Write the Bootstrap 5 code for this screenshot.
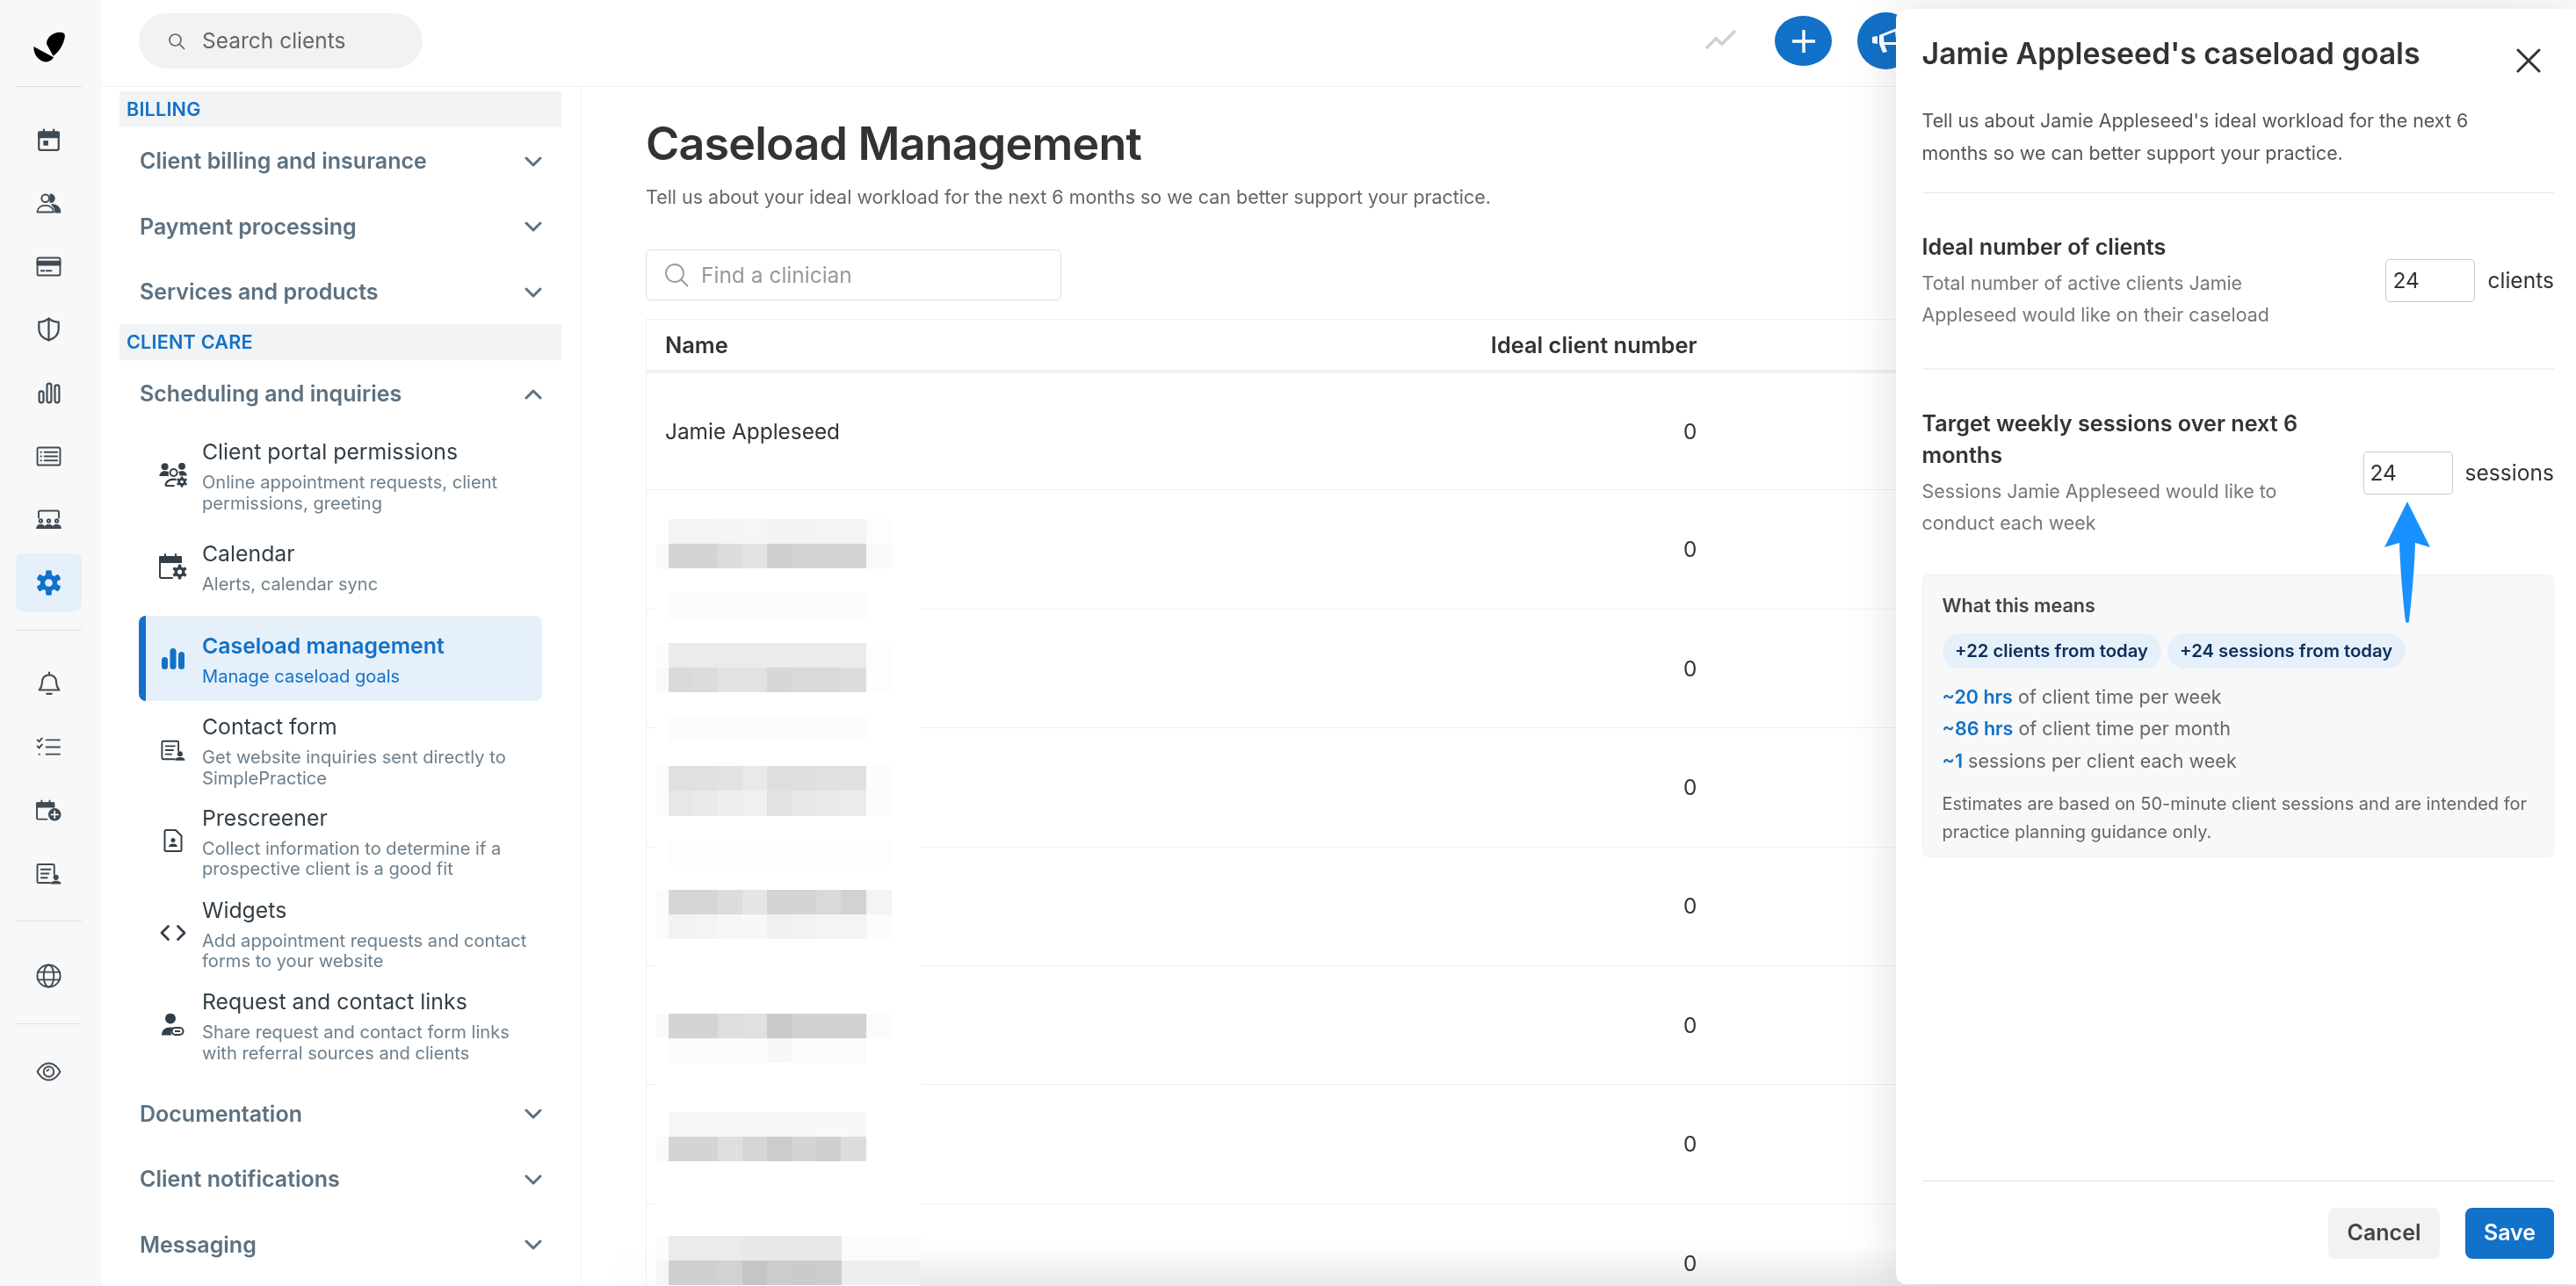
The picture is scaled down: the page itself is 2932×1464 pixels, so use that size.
<!DOCTYPE html>
<html lang="en">
<head>
<meta charset="utf-8">
<title>Caseload Management</title>
<link href="https://cdn.jsdelivr.net/npm/bootstrap@5.3.0/dist/css/bootstrap.min.css" rel="stylesheet">
<style>
html,body{margin:0;width:2932px;height:1464px;overflow:hidden;background:#fff}
body{font-family:Inter,"Liberation Sans",sans-serif;color:#333;position:relative}
svg{display:block;flex:none}
.stroke-ico{fill:none;stroke:currentColor;stroke-width:2;stroke-linecap:round;stroke-linejoin:round}
.shell{width:2932px;height:1464px}
/* icon rail */
.rail{width:115px;height:1464px;background:#f8f8f9;color:#3f4b55;flex:none}
.rail-logo{height:99px;margin:0 22px 0 18px;padding-top:9px;border-bottom:1px solid #dfdfdf;color:#000}
.rail-group{margin:0 22px 0 18px;padding:24px 0 18px;border-bottom:1px solid #dfdfdf}
.rail-group:last-child{border-bottom:0}
.rg-c{padding-top:26px}
.rg-d{padding-top:18px}
.rail-item{height:72px}
.rail-active{height:66px;margin:3px 0;border-radius:8px;background:#e5f0fa;color:#1271c8}
/* top */
.workspace{width:2817px;height:1464px}
.topbar{height:99px;border-bottom:1px solid #efefef;flex:none}
.search-pill{width:323px;height:63px;margin:15px 0 0 43px;border-radius:32px;background:#f2f2f2;color:#666;font-size:24.500px;padding-left:33px;gap:19px}
.chart-mark{position:absolute;left:1941px;top:33px;color:#cfcfcf}
.round-btn{position:absolute;background:#1271c8;color:#fff;border-radius:50%}
.rb-plus{left:2020px;top:18px;width:65px;height:57px}
.rb-horn{left:2114px;top:14px;width:65px;height:65px}
/* settings nav */
.setnav{width:547px;flex:none;padding:5px 22px 0 21px;border-right:1px solid #f6f6f6}
.band{height:41px;background:#f1f3f5;color:#1271c8;font-weight:600;font-size:21.600px;padding-left:8px;line-height:41px;letter-spacing:.2px;margin-bottom:1.500px}
.band-b{margin-top:-1px;margin-bottom:1.500px}
.acc-row{height:74.500px;padding:0 22px 0 23px;color:#5c7181;font-size:25px;font-weight:600}
.sub-list{color:#333f48}
.sub-item{margin-left:22px;margin-right:22px;padding-left:72px;position:relative;display:flex;flex-direction:column;justify-content:flex-start}
.sub-ttl{font-size:24.800px;line-height:36px;white-space:nowrap}
.sub-txt{font-size:20.100px;line-height:23.600px;color:#6c7f8c;margin-top:6px}
.sub-ico{position:absolute;left:23px;top:50%;transform:translateY(-50%);width:32px;display:flex;justify-content:center}
.si-active{background:#e5f0fa;color:#1271c8;border-left:8px solid #1271c8;border-radius:8px;padding:16px 0 16px 64px;margin-top:23px}
.si-active .sub-ttl{font-weight:600}
.si-active .sub-txt{color:#1271c8}
.si-active .sub-ico{left:15px}
.mt-a{margin-top:10px}.mt-b{margin-top:27px}.mt-c{margin-top:11px}.mt-d{margin-top:14px}.mt-e{margin-top:16px}.mt-f{margin-top:15px}.mt-g{margin-top:20px}
/* main */
.content{padding:35px 0 0 73px;flex:1;position:relative;overflow:hidden}
.content::after{content:"";position:absolute;left:30px;right:0;bottom:0;height:46px;z-index:1;mix-blend-mode:multiply;background:linear-gradient(rgba(232,232,232,0),#e8e8e8);-webkit-mask-image:linear-gradient(90deg,transparent,#000 360px);mask-image:linear-gradient(90deg,transparent,#000 360px)}
.page-ttl{font-size:52px;line-height:60px;font-weight:600;margin:0;color:#333;letter-spacing:-.8px}
.page-sub{font-size:21.450px;line-height:30px;color:#666;margin:15px 0 45px}
.finder{width:473px;height:58px;border:1px solid #ddd;border-radius:6px;padding-left:20px;gap:14px;color:#999;font-size:24.500px;margin-bottom:21px}
.grid-table{width:2140px;table-layout:fixed;border-collapse:collapse;border-left:1px solid #f0f0f0;font-size:24.400px;margin:0}
.grid-table th{height:59px;font-weight:600;font-size:25.400px;border-top:1px solid #f0f0f0;border-bottom:4px solid #f2f2f2;color:#333;padding:2px 0 0}
.grid-table td{height:135.400px;border-bottom:1px solid #f0f0f0;padding:0;color:#333}
.cell-name{padding-left:21px!important}
.redact{position:absolute;left:85px;top:492px;width:301px;height:873px;background:#fff;z-index:2}
.pl{height:28.130px;width:301px}
.g0{background:linear-gradient(90deg,#fff 14px,#f4f4f4 14px 70px,#f5f5f5 70px 98px,#f6f6f6 98px 126px,#f3f3f3 126px 182px,#f4f4f4 182px 239px,#fdfdfd 239px 268px,#fff 268px)}
.g1{background:linear-gradient(90deg,#fafafa 14px,#d4d4d4 14px 70px,#ddd 70px 98px,#e3e3e3 98px 126px,#cfcfcf 126px 154px,#d3d3d3 154px 239px,#fafafa 239px 268px,#fff 268px)}
.g3{background:linear-gradient(90deg,#fff 14px,#fcfcfc 14px 239px,#fff 239px)}
.g5{background:linear-gradient(90deg,#fcfcfc 14px,#ebebeb 14px 239px,#fdfdfd 239px 268px,#fff 268px)}
.g6{background:linear-gradient(90deg,#fafafa 14px,#dadada 14px 42px,#dcdcdc 42px 70px,#e2e2e2 70px 126px,#d6d6d6 126px 154px,#d9d9d9 154px 210px,#ddd 210px 239px,#fdfdfd 239px 268px,#fff 268px)}
.g10{background:linear-gradient(90deg,#fcfcfc 14px,#e0e0e0 14px 70px,#e2e2e2 70px 98px,#e9e9e9 98px 126px,#dedede 126px 154px,#dfdfdf 154px 182px,#e0e0e0 182px 239px,#fcfcfc 239px 268px,#fff 268px)}
.g11{background:linear-gradient(90deg,#fcfcfc 14px,#e7e7e7 14px 42px,#eaeaea 42px 70px,#eee 70px 98px,#f0f0f0 98px 126px,#e2e2e2 126px 154px,#e8e8e8 154px 182px,#e9e9e9 182px 210px,#ebebeb 210px 239px,#fcfcfc 239px 268px,#fff 268px)}
.g13{background:linear-gradient(90deg,#fff 14px,#fdfdfd 14px 268px,#fff 268px)}
.g15{background:linear-gradient(90deg,#fbfbfb 14px,#d6d6d6 14px 70px,#ddd 70px 98px,#e6e6e6 98px 126px,#d4d4d4 126px 182px,#d9d9d9 182px 210px,#d2d2d2 210px 239px,#f4f4f4 239px 268px,#fff 268px)}
.g16{background:linear-gradient(90deg,#fcfcfc 14px,#f3f3f3 14px 42px,#f4f4f4 42px 70px,#f7f7f7 70px 98px,#f8f8f8 98px 126px,#f1f1f1 126px 154px,#f2f2f2 154px 182px,#f4f4f4 182px 239px,#fcfcfc 239px 268px,#fff 268px)}
.g20{background:linear-gradient(90deg,#fafafa 14px,#d3d3d3 14px 70px,#dedede 70px 98px,#e0e0e0 98px 126px,#cacaca 126px 154px,#d1d1d1 154px 239px,#fbfbfb 239px 268px,#fff 268px)}
.g21{background:linear-gradient(90deg,#fff 14px,#fbfbfb 14px 126px,#f8f8f8 126px 154px,#fbfbfb 154px 239px,#fff 239px)}
.g24{background:linear-gradient(90deg,#fff 14px,#f6f6f6 14px 70px,#f7f7f7 70px 98px,#f6f6f6 98px 154px,#f8f8f8 154px 239px,#fff 239px)}
.g25{background:linear-gradient(90deg,#fafafa 14px,#d4d4d4 14px 70px,#dfdfdf 70px 98px,#d6d6d6 98px 126px,#ccc 126px 154px,#d4d4d4 154px 182px,#cfcfcf 182px 210px,#ddd 210px 239px,#fff 239px)}
.g29{background:linear-gradient(90deg,#fcfcfc 14px,#ebebeb 14px 98px,#e8e8e8 98px 211px,#fbfbfb 211px)}
.g30{background:linear-gradient(90deg,#f6f6f6 14px,#cfcfcf 14px 70px,#d2d2d2 70px 98px,#c5c5c5 98px 126px,#ccc 126px 154px,#cbcbcb 154px 182px,#ccc 182px 211px,#eee 211px)}
/* panel */
.goal-panel{position:absolute;left:2158px;top:10px;right:0;bottom:2px;background:#fff;border-radius:12px 0 0 12px;box-shadow:0 0 60px rgba(0,0,0,.13);padding:27px 25px 29px 29.500px;z-index:5}
.goal-ttl{font-size:33.900px;line-height:48px;font-weight:600;color:#333;margin:0}
.closer{position:absolute;left:706px;top:45px}
.goal-intro{font-size:21.400px;line-height:36.500px;color:#555;margin:34px 0 27px}
.goal-sec{padding:43px 0 42px;border-top:1px solid #e6e6e6}
.goal-sec-b{border-top:2px solid #f2f2f2;padding-bottom:40px}
.goal-q{max-width:460px}
.goal-h{font-size:25.200px;line-height:36.500px;font-weight:600;color:#333}
.goal-d{font-size:21.400px;line-height:36.500px;color:#777;margin-top:4px}
.goal-input{width:102px;height:49px;border:1px solid #c9c9c9;border-radius:5px;padding-left:7px;font-size:24.500px;line-height:47px;color:#333}
.goal-unit{font-size:24.600px;color:#333;margin-left:14px;line-height:47px}
.means{height:322px;background:#f8f8f8;border:1px solid #f0f0f0;border-radius:7px;padding:19px 20px 0 22px;font-size:21.500px;color:#666}
.means-h{font-weight:600;font-size:21.600px;line-height:30px;color:#444}
.pill-tag{height:40px;border-radius:20px;background:#e5f0fa;color:#0c2f5c;font-size:20.300px;font-weight:600;line-height:40px;padding:0 14.500px}
.pill-row{gap:7px;margin:17px 0 14px}
.means-l{line-height:36.500px}
.means-l b{color:#1271c8;font-weight:600}
.means-n{font-size:20px;line-height:32px;margin-top:15px}
.goal-foot{border-top:1px solid #e3e3e3;padding-top:30px;margin-top:auto;gap:29px}
.act-btn{height:58px;border:0;border-radius:8px;font-size:25px;font-weight:600;padding:0}
.act-c{width:127px;background:#f2f2f2;color:#444}
.act-s{width:101px;background:#1271c8;color:#fff}
.blue-arrow{position:absolute;left:556px;top:561px;z-index:6}
</style>
</head>
<body>
<div class="shell d-flex">
  <nav class="rail d-flex flex-column">
    <div class="rail-logo d-flex align-items-center justify-content-center">
      <svg width="38" height="36" viewBox="36 36 38 36" fill="currentColor"><path d="M72.800 40C72.500 36.500 66 36 61 38C55 40.500 52 45 52 50L59.500 63.800C64 61 67.500 56 70 51C71.800 47 73 43 72.800 40Z"/><path d="M37.300 53L60 65.300C58 68.500 55 70.500 52 70.500C44 70.500 37 63 37.300 53Z"/></svg>
    </div>
    <div class="rail-group">
      <div class="rail-item d-flex align-items-center justify-content-center">
        <svg width="27" height="27" viewBox="0 0 24 24" class="stroke-ico"><rect x="2" y="4" width="20" height="18" rx="1.500"/><path d="M2 4h20v5H2z" fill="currentColor"/><path d="M7 1.500v3M17 1.500v3"/><rect x="6.500" y="12.500" width="5" height="5" fill="currentColor" stroke="none"/></svg>
      </div>
      <div class="rail-item d-flex align-items-center justify-content-center">
        <svg width="29" height="23" viewBox="0 0 30 24" class="stroke-ico"><circle cx="11" cy="6" r="4.500"/><path d="M17 1.500a4.500 4.500 0 0 1 0 9z" fill="currentColor"/><path d="M1.500 22.500c0-5 4-8 9.500-8s9.500 3 9.500 8z"/><path d="M19 13.500c5 .5 9 3.500 9.500 9H23c0-3.500-1.500-6.500-4-9z" fill="currentColor"/></svg>
      </div>
      <div class="rail-item d-flex align-items-center justify-content-center">
        <svg width="29" height="23" viewBox="0 0 30 24" class="stroke-ico"><rect x="1.500" y="1.500" width="27" height="21" rx="2"/><path d="M1.500 6h27v4h-27z" fill="currentColor"/><path d="M6 17h3.500M12 17h6"/></svg>
      </div>
      <div class="rail-item d-flex align-items-center justify-content-center">
        <svg width="27" height="28" viewBox="0 0 24 25" class="stroke-ico"><path d="M12 1.500c3 2.500 6 3.500 10 3.500v7c0 5.500-4 9.500-10 11.500C6 21.500 2 17.500 2 12V5c4 0 7-1 10-3.500z"/><path d="M12 1.500v22"/></svg>
      </div>
      <div class="rail-item d-flex align-items-center justify-content-center">
        <svg width="26" height="25" viewBox="0 0 24 22" class="stroke-ico"><rect x="1.500" y="9" width="4.500" height="12" rx="2.200"/><rect x="9.700" y="1" width="4.500" height="20" rx="2.200"/><rect x="18" y="2.500" width="4.500" height="18.500" rx="2.200"/></svg>
      </div>
      <div class="rail-item d-flex align-items-center justify-content-center">
        <svg width="29" height="23" viewBox="0 0 30 24" class="stroke-ico"><rect x="1.500" y="1.500" width="27" height="21" rx="2"/><path d="M10 7h15M10 12h15M10 17h15"/><path d="M5.500 7h.5M5.500 12h.5M5.500 17h.5"/></svg>
      </div>
      <div class="rail-item d-flex align-items-center justify-content-center">
        <svg width="29" height="23" viewBox="0 0 30 24" class="stroke-ico"><path d="M3 10V3a1.500 1.500 0 0 1 1.500-1.500h21A1.500 1.500 0 0 1 27 3v7"/><circle cx="5.500" cy="13.500" r="1.800"/><circle cx="15" cy="13.500" r="1.800"/><circle cx="24.500" cy="13.500" r="1.800"/><g fill="currentColor" stroke="none"><path d="M0 23c.2-4 2.500-5.500 5.500-5.500s5.300 1.500 5.500 5.500z"/><path d="M9.500 23c.2-4 2.500-5.500 5.500-5.500s5.300 1.500 5.500 5.500z"/><path d="M19 23c.2-4 2.500-5.500 5.500-5.500s5.300 1.500 5.500 5.500z"/></g></svg>
      </div>
      <div class="rail-active d-flex align-items-center justify-content-center">
        <svg width="29" height="29" viewBox="-12 -12 24 24" fill="currentColor"><circle r="8"/><g><rect x="-2.800" y="-11.800" width="5.600" height="6" rx="1.500"/><rect x="-2.800" y="-11.800" width="5.600" height="6" rx="1.500" transform="rotate(60)"/><rect x="-2.800" y="-11.800" width="5.600" height="6" rx="1.500" transform="rotate(120)"/><rect x="-2.800" y="-11.800" width="5.600" height="6" rx="1.500" transform="rotate(180)"/><rect x="-2.800" y="-11.800" width="5.600" height="6" rx="1.500" transform="rotate(240)"/><rect x="-2.800" y="-11.800" width="5.600" height="6" rx="1.500" transform="rotate(300)"/></g><circle r="3.600" fill="#e5f0fa"/></svg>
      </div>
    </div>
    <div class="rail-group">
      <div class="rail-item d-flex align-items-center justify-content-center">
        <svg width="26" height="28" viewBox="0 0 24 26" class="stroke-ico"><path d="M12 1.500v2.500M4.500 12c0-5 3-8 7.500-8s7.500 3 7.500 8c0 4 1.500 6 3 8h-21c1.500-2 3-4 3-8z"/><path d="M9.500 24h5"/></svg>
      </div>
      <div class="rail-item d-flex align-items-center justify-content-center">
        <svg width="29" height="23" viewBox="0 0 30 24" class="stroke-ico"><path d="M12 3.500h16M12 12h16M12 20.500h16"/><path d="M1.500 3.500l2 2 3.500-4M1.500 11l2 2 3.500-4M3.500 20.500h.5"/></svg>
      </div>
      <div class="rail-item d-flex align-items-center justify-content-center">
        <svg width="29" height="25" viewBox="0 0 30 26" class="stroke-ico"><path d="M21 9V6a1.500 1.500 0 0 0-1.500-1.500h-17A1.500 1.500 0 0 0 1 6v16a1.500 1.500 0 0 0 1.500 1.500H13"/><path d="M1 4.500h20V9H1z" fill="currentColor"/><path d="M6.500 1.500v3M16 1.500v3"/><circle cx="22" cy="18" r="7.500" fill="currentColor" stroke="none"/><path d="M22 14v8M18 18h8" stroke="#f8f8f9" stroke-width="1.800"/></svg>
      </div>
      <div class="rail-item d-flex align-items-center justify-content-center">
        <svg width="29" height="25" viewBox="0 0 30 26" class="stroke-ico"><path d="M17 24H3a1.500 1.500 0 0 1-1.500-1.500v-19A1.500 1.500 0 0 1 3 2h17a1.500 1.500 0 0 1 1.500 1.500V14"/><path d="M6 8h11M6 13h9M6 18h7"/><circle cx="23.500" cy="17.500" r="3.200" fill="currentColor" stroke="none"/><path d="M17.500 25.500c.2-3 2.500-4 6-4s5.800 1 6 4z" fill="currentColor" stroke="none"/></svg>
      </div>
    </div>
    <div class="rail-group rg-c">
      <div class="rail-item d-flex align-items-center justify-content-center">
        <svg width="29" height="28" viewBox="0 0 30 29" class="stroke-ico"><ellipse cx="15" cy="14.500" rx="13.500" ry="13"/><ellipse cx="15" cy="14.500" rx="6" ry="13"/><path d="M2 10h26M2 19h26"/></svg>
      </div>
    </div>
    <div class="rail-group rg-d">
      <div class="rail-item d-flex align-items-center justify-content-center">
        <svg width="29" height="22" viewBox="0 0 30 23" class="stroke-ico"><path d="M1.500 11.500S6.500 1.500 15 1.500s13.500 10 13.500 10-5 10-13.500 10S1.500 11.500 1.500 11.500z"/><circle cx="15" cy="11.500" r="6"/><path d="M13 10.500a3 3 0 0 1 2-1.500"/></svg>
      </div>
    </div>
  </nav>
  <div class="workspace d-flex flex-column">
    <header class="topbar">
      <div class="search-pill d-flex align-items-center">
        <svg width="20" height="20" viewBox="0 0 20 20" fill="none" stroke="#666" stroke-width="1.700" stroke-linecap="round"><circle cx="8.500" cy="8.500" r="6.500"/><path d="M13.500 13.500l5 5"/></svg>
        <span>Search clients</span>
      </div>
    </header>
    <div class="d-flex flex-grow-1" style="min-height:0">
      <aside class="setnav">
        <div class="band">BILLING</div>
        <div class="acc-row d-flex align-items-center justify-content-between"><span>Client billing and insurance</span><svg width="20" height="14" viewBox="0 0 20 14" fill="none" stroke="currentColor" stroke-width="3" stroke-linecap="round" stroke-linejoin="round"><path d="M2 3l8 8 8-8"/></svg></div>
        <div class="acc-row d-flex align-items-center justify-content-between"><span>Payment processing</span><svg width="20" height="14" viewBox="0 0 20 14" fill="none" stroke="currentColor" stroke-width="3" stroke-linecap="round" stroke-linejoin="round"><path d="M2 3l8 8 8-8"/></svg></div>
        <div class="acc-row d-flex align-items-center justify-content-between"><span>Services and products</span><svg width="20" height="14" viewBox="0 0 20 14" fill="none" stroke="currentColor" stroke-width="3" stroke-linecap="round" stroke-linejoin="round"><path d="M2 3l8 8 8-8"/></svg></div>
        <div class="band band-b">CLIENT CARE</div>
        <div class="acc-row d-flex align-items-center justify-content-between"><span>Scheduling and inquiries</span><svg width="20" height="14" viewBox="0 0 20 14" fill="none" stroke="currentColor" stroke-width="3" stroke-linecap="round" stroke-linejoin="round"><path d="M2 11l8-8 8 8"/></svg></div>
        <div class="sub-list">
          <div class="sub-item mt-a">
            <span class="sub-ico"><svg width="32" height="28" viewBox="0 0 32 28" fill="currentColor"><circle cx="6.600" cy="4.300" r="4"/><path d="M.3 15C1 11 3.500 9.300 6.600 9.300c1.800 0 3.300.4 4.500 1.200-.6 1.300-.6 3 .1 4.500z"/><circle cx="26" cy="3.800" r="4"/><path d="M22 10.500c.8-.8 2.500-1.300 4-1.300 3 0 5.500 2 6 5.300h-8.500c0-1.500-.6-3-1.500-4z"/><circle cx="16.600" cy="11" r="4" fill="none" stroke="currentColor" stroke-width="2"/><path d="M7.500 26c0-4.500 4-7.300 9-7.300 1 0 2 .1 3 .4M7.500 26h10" fill="none" stroke="currentColor" stroke-width="2.200"/><g transform="translate(26 21.500)"><circle r="4.500"/><rect x="-1.300" y="-6.300" width="2.600" height="12.600" rx="1"/><rect x="-1.300" y="-6.300" width="2.600" height="12.600" rx="1" transform="rotate(60)"/><rect x="-1.300" y="-6.300" width="2.600" height="12.600" rx="1" transform="rotate(120)"/><circle r="1.800" fill="#fff"/></g></svg></span>
            <div class="sub-ttl">Client portal permissions</div>
            <div class="sub-txt">Online appointment requests, client<br>permissions, greeting</div>
          </div>
          <div class="sub-item mt-b">
            <span class="sub-ico"><svg width="32" height="30" viewBox="0 0 32 30" class="stroke-ico"><path d="M25 10V5.500A1.500 1.500 0 0 0 23.500 4h-21A1.500 1.500 0 0 0 1 5.500v21A1.500 1.500 0 0 0 2.500 28H15"/><path d="M1 4h24v6H1z" fill="currentColor"/><path d="M7 1v3M19 1v3"/><g transform="translate(23.500 21)" fill="currentColor" stroke="none"><circle r="6"/><rect x="-1.800" y="-8.400" width="3.600" height="16.800" rx="1"/><rect x="-1.800" y="-8.400" width="3.600" height="16.800" rx="1" transform="rotate(60)"/><rect x="-1.800" y="-8.400" width="3.600" height="16.800" rx="1" transform="rotate(120)"/><circle r="2.600" fill="#fff"/></g></svg></span>
            <div class="sub-ttl">Calendar</div>
            <div class="sub-txt">Alerts, calendar sync</div>
          </div>
          <div class="sub-item si-active">
            <span class="sub-ico"><svg width="26" height="24" viewBox="0 0 26 24" fill="currentColor"><rect x="0" y="10" width="7" height="14" rx="3.500"/><rect x="9.500" y="0" width="7" height="24" rx="3.500"/><rect x="19" y="4" width="7" height="20" rx="3.500"/></svg></span>
            <div class="sub-ttl">Caseload management</div>
            <div class="sub-txt">Manage caseload goals</div>
          </div>
          <div class="sub-item mt-c">
            <span class="sub-ico"><svg width="28" height="26" viewBox="0 0 30 26" class="stroke-ico"><path d="M17 24H3a1.500 1.500 0 0 1-1.500-1.500v-19A1.500 1.500 0 0 1 3 2h17a1.500 1.500 0 0 1 1.500 1.500V14"/><path d="M6 8h11M6 13h9M6 18h7"/><circle cx="23.500" cy="17.500" r="3.200" fill="currentColor" stroke="none"/><path d="M17.500 25.500c.2-3 2.500-4 6-4s5.800 1 6 4z" fill="currentColor" stroke="none"/></svg></span>
            <div class="sub-ttl">Contact form</div>
            <div class="sub-txt">Get website inquiries sent directly to<br>SimplePractice</div>
          </div>
          <div class="sub-item mt-d">
            <span class="sub-ico"><svg width="22" height="27" viewBox="0 0 22 27" class="stroke-ico"><path d="M14 1.500H3A1.500 1.500 0 0 0 1.500 3v21A1.500 1.500 0 0 0 3 25.500h16a1.500 1.500 0 0 0 1.500-1.500V8z"/><circle cx="11" cy="13" r="2.500" fill="currentColor" stroke="none"/><path d="M6 20.500c.3-2.500 2-3.500 5-3.500s4.700 1 5 3.500z" fill="currentColor" stroke="none"/></svg></span>
            <div class="sub-ttl">Prescreener</div>
            <div class="sub-txt">Collect information to determine if a<br>prospective client is a good fit</div>
          </div>
          <div class="sub-item mt-e">
            <span class="sub-ico"><svg width="30" height="19" viewBox="0 0 30 19" fill="none" stroke="currentColor" stroke-width="2.800" stroke-linecap="round" stroke-linejoin="round"><path d="M9.500 2L2 9.500 9.500 17M20.500 2L28 9.500 20.500 17"/></svg></span>
            <div class="sub-ttl">Widgets</div>
            <div class="sub-txt">Add appointment requests and contact<br>forms to your website</div>
          </div>
          <div class="sub-item mt-f">
            <span class="sub-ico"><svg width="26" height="27" viewBox="0 0 26 27" fill="currentColor"><circle cx="10" cy="6" r="6"/><path d="M0 25c0-6 4-9 10-9 1 0 2 .1 3 .3-2 1.500-3 5-2 8.700z"/><rect x="11.500" y="16.500" width="13" height="8" rx="4" fill="none" stroke="currentColor" stroke-width="2"/><path d="M15 20.500h6" stroke="currentColor" stroke-width="2"/></svg></span>
            <div class="sub-ttl">Request and contact links</div>
            <div class="sub-txt">Share request and contact form links<br>with referral sources and clients</div>
          </div>
        </div>
        <div class="acc-row mt-g d-flex align-items-center justify-content-between"><span>Documentation</span><svg width="20" height="14" viewBox="0 0 20 14" fill="none" stroke="currentColor" stroke-width="3" stroke-linecap="round" stroke-linejoin="round"><path d="M2 3l8 8 8-8"/></svg></div>
        <div class="acc-row d-flex align-items-center justify-content-between"><span>Client notifications</span><svg width="20" height="14" viewBox="0 0 20 14" fill="none" stroke="currentColor" stroke-width="3" stroke-linecap="round" stroke-linejoin="round"><path d="M2 3l8 8 8-8"/></svg></div>
        <div class="acc-row d-flex align-items-center justify-content-between"><span>Messaging</span><svg width="20" height="14" viewBox="0 0 20 14" fill="none" stroke="currentColor" stroke-width="3" stroke-linecap="round" stroke-linejoin="round"><path d="M2 3l8 8 8-8"/></svg></div>
      </aside>
      <main class="content">
        <h1 class="page-ttl">Caseload Management</h1>
        <p class="page-sub">Tell us about your ideal workload for the next 6 months so we can better support your practice.</p>
        <div class="finder d-flex align-items-center">
          <svg width="28" height="28" viewBox="0 0 28 28" fill="none" stroke="#999" stroke-width="1.800" stroke-linecap="round"><circle cx="12" cy="12" r="10"/><path d="M19.500 19.500l7 7"/></svg>
          <span>Find a clinician</span>
        </div>
        <table class="grid-table">
          <colgroup><col style="width:800px"><col style="width:396px"><col></colgroup>
          <thead><tr><th class="cell-name">Name</th><th class="text-end">Ideal client number</th><th></th></tr></thead>
          <tbody>
            <tr><td class="cell-name">Jamie Appleseed</td><td class="text-end">0</td><td></td></tr>
            <tr><td></td><td class="text-end">0</td><td></td></tr>
            <tr><td></td><td class="text-end">0</td><td></td></tr>
            <tr><td></td><td class="text-end">0</td><td></td></tr>
            <tr><td></td><td class="text-end">0</td><td></td></tr>
            <tr><td></td><td class="text-end">0</td><td></td></tr>
            <tr><td></td><td class="text-end">0</td><td></td></tr>
            <tr><td></td><td class="text-end">0</td><td></td></tr>
          </tbody>
        </table>
        <div class="redact">
          <div class="pl g0"></div><div class="pl g1"></div><div class="pl"></div><div class="pl g3"></div><div class="pl"></div>
          <div class="pl g5"></div><div class="pl g6"></div><div class="pl"></div><div class="pl g3"></div><div class="pl"></div>
          <div class="pl g10"></div><div class="pl g11"></div><div class="pl"></div><div class="pl g13"></div><div class="pl"></div>
          <div class="pl g15"></div><div class="pl g16"></div><div class="pl"></div><div class="pl"></div><div class="pl"></div>
          <div class="pl g20"></div><div class="pl g21"></div><div class="pl"></div><div class="pl"></div>
          <div class="pl g24"></div><div class="pl g25"></div><div class="pl"></div><div class="pl"></div><div class="pl"></div>
          <div class="pl g29"></div><div class="pl g30"></div>
        </div>
      </main>
    </div>
  </div>
</div>

<svg class="chart-mark" width="36" height="24" viewBox="0 0 36 24" fill="none" stroke="currentColor" stroke-width="3.500"><path d="M1 22l11-11 7 6L34 2"/></svg>
<div class="round-btn rb-plus d-flex align-items-center justify-content-center"><svg width="26" height="26" viewBox="0 0 26 26" stroke="#fff" stroke-width="3.400"><path d="M13 0v26M0 13h26"/></svg></div>
<div class="round-btn rb-horn"><svg width="34" height="30" viewBox="0 0 34 30" fill="#fff" style="margin:17px 0 0 17px"><path d="M0 11l6-1 0 9-6-1zM8 9l20-8 3 19-17 0 3 8-5 1-4-10z"/><path d="M13 10l13-5 1.500 12-14 0z" fill="#1271c8"/></svg></div>

<aside class="goal-panel d-flex flex-column">
  <h2 class="goal-ttl">Jamie Appleseed's caseload goals</h2>
  <svg class="closer" width="28" height="28" viewBox="0 0 28 28" stroke="#333" stroke-width="3" stroke-linecap="round"><path d="M2 2l24 24M26 2L2 26"/></svg>
  <p class="goal-intro">Tell us about Jamie Appleseed's ideal workload for the next 6<br>months so we can better support your practice.</p>
  <section class="goal-sec d-flex align-items-center justify-content-between">
    <div class="goal-q">
      <div class="goal-h">Ideal number of clients</div>
      <div class="goal-d">Total number of active clients Jamie Appleseed would like on their caseload</div>
    </div>
    <div class="d-flex align-items-center"><div class="goal-input">24</div><span class="goal-unit">clients</span></div>
  </section>
  <section class="goal-sec goal-sec-b d-flex align-items-center justify-content-between">
    <div class="goal-q">
      <div class="goal-h">Target weekly sessions over next 6 months</div>
      <div class="goal-d">Sessions Jamie Appleseed would like to conduct each week</div>
    </div>
    <div class="d-flex align-items-center"><div class="goal-input">24</div><span class="goal-unit">sessions</span></div>
  </section>
  <div class="means">
    <div class="means-h">What this means</div>
    <div class="pill-row d-flex"><span class="pill-tag">+22 clients from today</span><span class="pill-tag">+24 sessions from today</span></div>
    <div class="means-l"><b>~20 hrs</b> of client time per week</div>
    <div class="means-l"><b>~86 hrs</b> of client time per month</div>
    <div class="means-l"><b>~1</b> sessions per client each week</div>
    <div class="means-n">Estimates are based on 50-minute client sessions and are intended for practice planning guidance only.</div>
  </div>
  <div class="goal-foot d-flex justify-content-end">
    <button type="button" class="act-btn act-c">Cancel</button>
    <button type="button" class="act-btn act-s">Save</button>
  </div>
  <svg class="blue-arrow" width="52" height="138" viewBox="0 0 52 138" fill="#1a90ff"><path d="M26 0L52 52 35 47C34 80 30 120 28 136a2 2 0 0 1-4 0C22 120 18 80 17 47L0 52Z"/></svg>
</aside>
</body>
</html>
